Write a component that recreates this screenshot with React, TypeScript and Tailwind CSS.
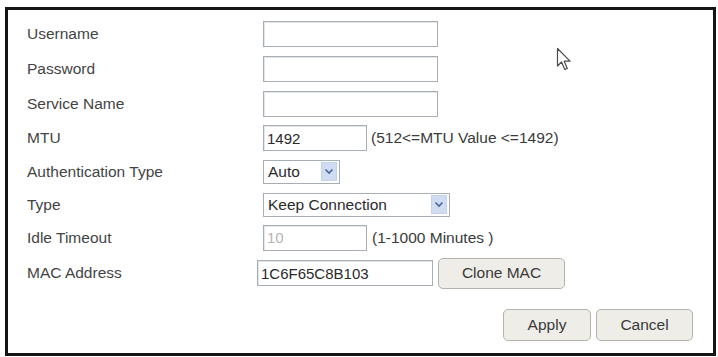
const inputCls =
  "h-[26px] border border-[#a7aeb6] bg-white px-[3px] text-[15px] text-[#2a2a2a] outline-none shadow-[inset_1px_1px_0_#e4e6ea]";

const Chevron = () => (
  <svg width="10" height="7" viewBox="0 0 10 7">
    <path d="M1.5 1.5 L5 5 L8.5 1.5" fill="none" stroke="#4a6796" strokeWidth="1.6" />
  </svg>
);

const Select = ({ value, width }: { value: string; width: string }) => (
  <div className={`flex h-[24px] items-center justify-between border border-[#a7aeb6] bg-white pl-[4px] pr-[2px] text-[15.5px] text-[#2a2a2a] ${width}`}>
    <span>{value}</span>
    <span className="flex h-[19px] w-[16px] items-center justify-center border border-[#c3d1ea] bg-[#d0dcf2]">
      <Chevron />
    </span>
  </div>
);

const Button = ({ label, width, height }: { label: string; width: string; height: string }) => (
  <button
    className={`flex items-center justify-center rounded-[5px] border border-[#b3b3ab] bg-[#eeede8] text-[15.5px] text-[#3a3a3a] ${width} ${height}`}
  >
    {label}
  </button>
);

const Row = ({ label, h, children }: { label: string; h: string; children: React.ReactNode }) => (
  <div className={`flex items-center ${h}`}>
    <div className="w-[236px] shrink-0 text-[15.5px] text-[#444]">{label}</div>
    <div className="flex items-center">{children}</div>
  </div>
);

const Cursor = () => (
  <svg className="absolute left-[548px] top-[37px]" width="17" height="25" viewBox="0 0 17 25">
    <path
      d="M1.5 1.5 L1.5 19 L5.5 15 L8.8 22.5 L11.3 21.4 L8.2 14.2 L14 14.2 Z"
      fill="white"
      stroke="#4a4a4a"
      strokeWidth="1.2"
      strokeLinejoin="round"
    />
  </svg>
);

export default function App() {
  return (
    <div className="h-[357px] w-[718px] bg-white pl-[5px] pt-[7px] font-['Liberation_Sans',Arial,sans-serif]">
      <div className="relative flex h-[349px] w-[711px] flex-col border-[3px] border-[#151515] pl-[19px] pr-[20px] pt-[7px]">
        <Cursor />
        <Row label="Username" h="h-[34px]">
          <input className={`${inputCls} w-[175px]`} defaultValue="" />
        </Row>
        <Row label="Password" h="h-[35px]">
          <input className={`${inputCls} w-[175px]`} type="password" defaultValue="" />
        </Row>
        <Row label="Service Name" h="h-[35px]">
          <input className={`${inputCls} w-[175px]`} defaultValue="" />
        </Row>
        <Row label="MTU" h="h-[34px]">
          <input className={`${inputCls} w-[104px]`} defaultValue="1492" />
          <span className="ml-[4px] text-[15.5px] text-[#3a3a3a]">(512&lt;=MTU Value &lt;=1492)</span>
        </Row>
        <Row label="Authentication Type" h="h-[33px]">
          <Select value="Auto" width="w-[77px]" />
        </Row>
        <Row label="Type" h="h-[33px]">
          <Select value="Keep Connection" width="w-[187px]" />
        </Row>
        <Row label="Idle Timeout" h="h-[33px]">
          <input
            className={`${inputCls} w-[104px] bg-[#ececec] text-[#b5b5b5]`}
            defaultValue="10"
            disabled
          />
          <span className="ml-[5px] text-[15.5px] text-[#3a3a3a]">(1-1000 Minutes )</span>
        </Row>
        <Row label="MAC Address" h="h-[38px]">
          <input className={`${inputCls} -ml-[6px] w-[176px] px-[1px]`} defaultValue="1C6F65C8B103" />
          <div className="ml-[5px]">
            <Button label="Clone MAC" width="w-[127px]" height="h-[31px]" />
          </div>
        </Row>
        <div className="mt-[17px] flex justify-end gap-[5px]">
          <Button label="Apply" width="w-[88px]" height="h-[32px]" />
          <Button label="Cancel" width="w-[97px]" height="h-[32px]" />
        </div>
      </div>
    </div>
  );
}
